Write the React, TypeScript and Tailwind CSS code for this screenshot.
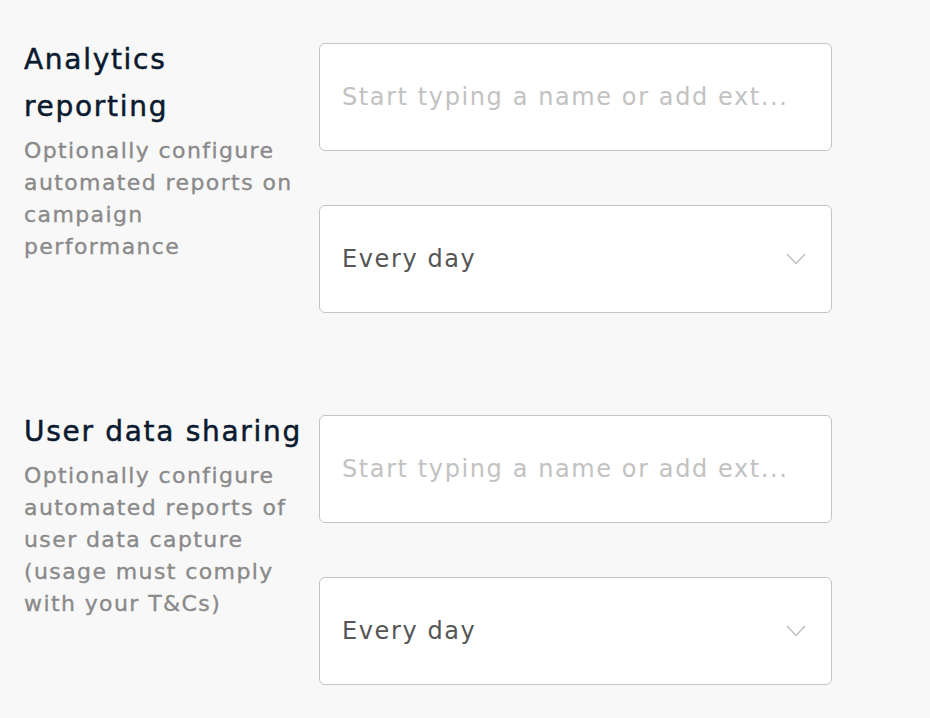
type Section = {
  title: string[];
  desc: string[];
};

const sections: Section[] = [
  {
    title: ['Analytics', 'reporting'],
    desc: ['Optionally configure', 'automated reports on', 'campaign', 'performance'],
  },
  {
    title: ['User data sharing'],
    desc: [
      'Optionally configure',
      'automated reports of',
      'user data capture',
      '(usage must comply',
      'with your T&Cs)',
    ],
  },
];

function Chevron() {
  return (
    <svg width="20" height="12" viewBox="0 0 20 12" fill="none" className="text-[#bdbdbd]">
      <polyline points="1,1 10,10.5 19,1" stroke="currentColor" strokeWidth="1.4" />
    </svg>
  );
}

function SettingRow({ section }: { section: Section }) {
  return (
    <div className="flex">
      {/* Label column */}
      <div className="w-[319px] shrink-0 pl-6">
        <h2 className="text-[28px] leading-[47px] tracking-[1.7px] text-[#0b1a2f] [-webkit-text-stroke:0.5px_#0b1a2f] -mt-[7px]">
          {section.title.map((line) => (
            <div key={line} className="whitespace-nowrap">
              {line}
            </div>
          ))}
        </h2>
        <p className="text-[22px] leading-[32px] tracking-[1.4px] text-[#8a8a8a] [-webkit-text-stroke:0.35px_#8a8a8a] mt-[5px]">
          {section.desc.map((line) => (
            <span key={line} className="block whitespace-nowrap">
              {line}
            </span>
          ))}
        </p>
      </div>

      {/* Inputs */}
      <div className="flex flex-col gap-[54px] w-[513px]">
        <input
          type="text"
          placeholder="Start typing a name or add ext..."
          className="h-[108px] w-full px-[22px] bg-white border-[1.5px] border-[#c4c4c8] rounded-[6px] text-[24px] tracking-[1.6px] text-[#555] placeholder:text-[#c2c2c2] outline-none"
        />
        <div className="h-[108px] w-full pl-[22px] pr-[25px] bg-white border-[1.5px] border-[#c4c4c8] rounded-[6px] flex items-center justify-between">
          <span className="text-[24px] tracking-[1.6px] text-[#555]">Every day</span>
          <Chevron />
        </div>
      </div>
    </div>
  );
}

export default function App() {
  return (
    <div
      className="w-[930px] h-[718px] bg-[#f8f8f8] pt-[43px] flex flex-col gap-[102px] overflow-hidden"
      style={{ fontFamily: '"DejaVu Sans", "Open Sans", sans-serif' }}
    >
      {sections.map((s) => (
        <SettingRow key={s.title.join(' ')} section={s} />
      ))}
    </div>
  );
}
